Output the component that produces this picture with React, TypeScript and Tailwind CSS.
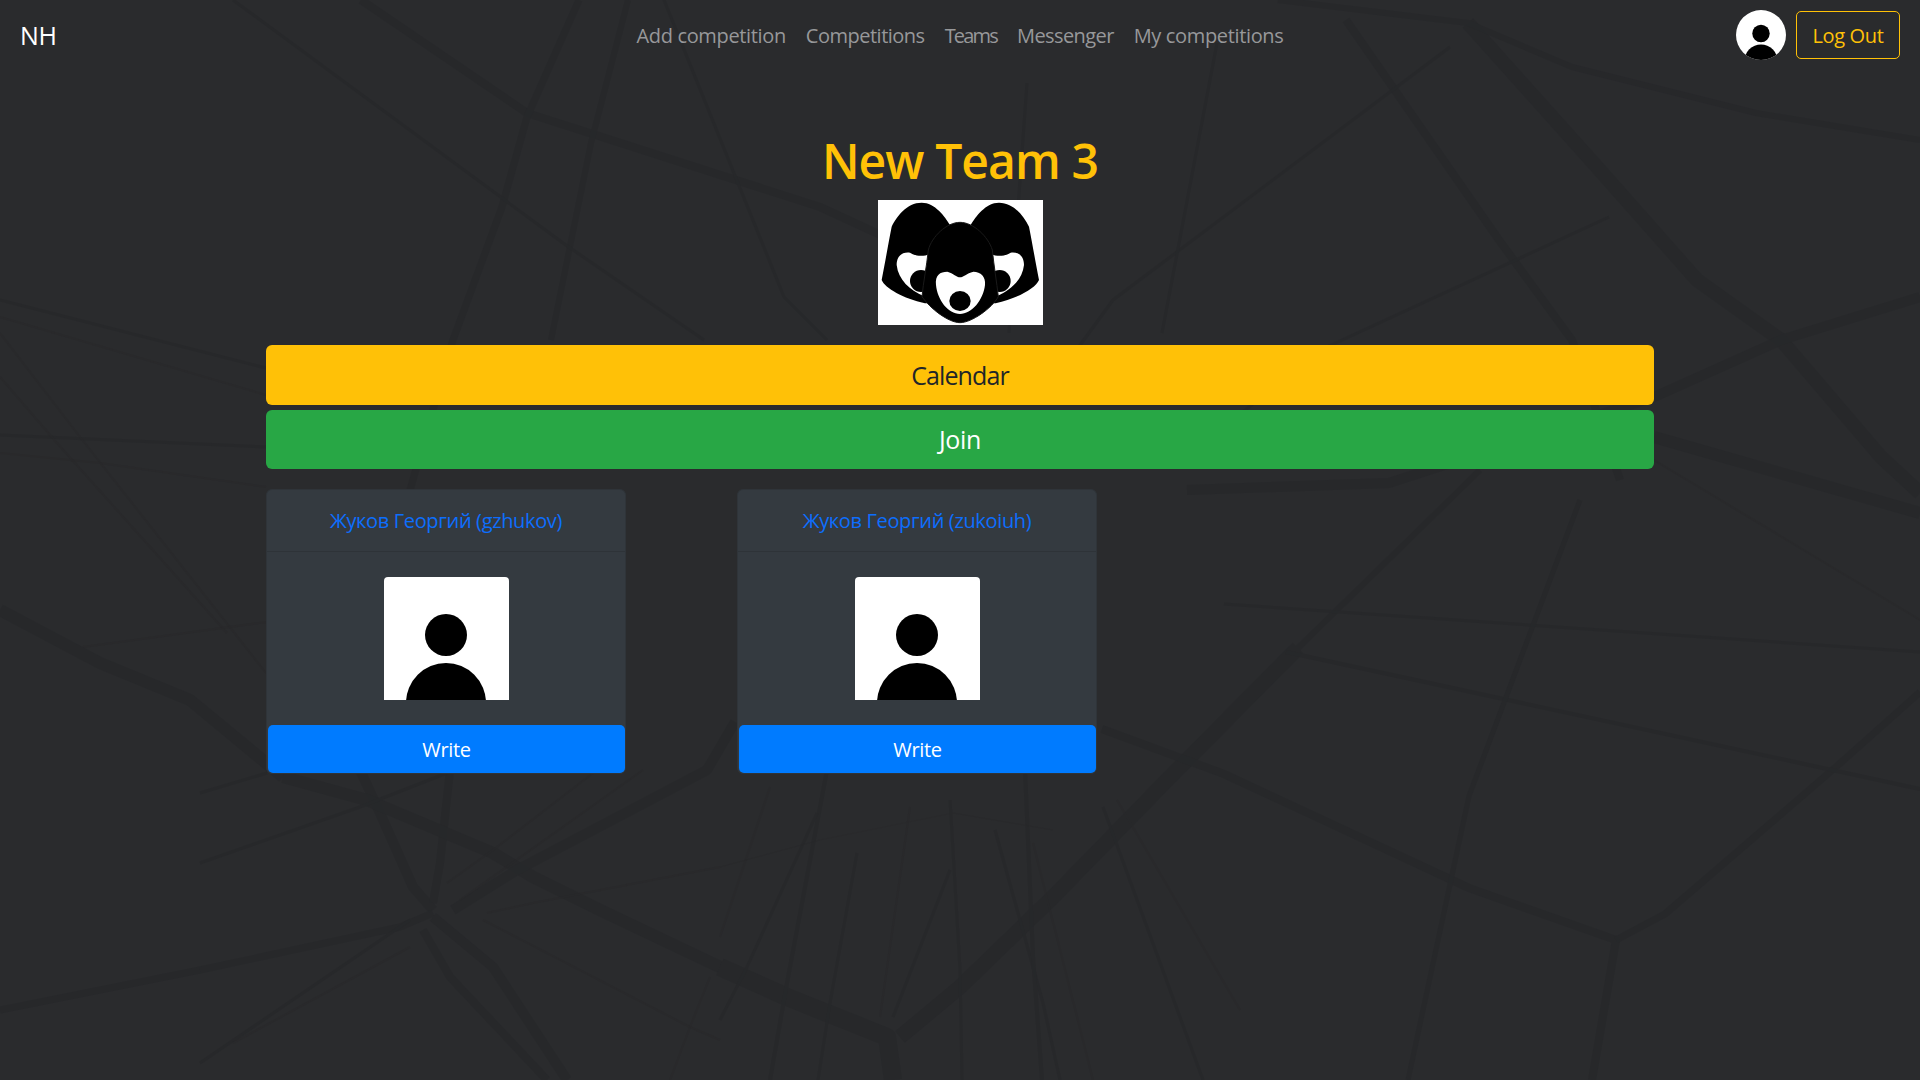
const bgLines: [string, number][] = [
  // top
  ['361,0 527,113 820,207 1000,290', 8],
  ['579,0 527,117 502,207 453,340 410,490', 7],
  ['628,0 591,143 551,340', 6],
  ['233,0 563,243 704,340', 3],
  ['664,0 784,297 827,340', 3],
  ['0,300 266,368', 3],
  ['1346,20 1499,240 1572,340 1620,480', 8],
  ['1468,23 1597,167 1697,280 1781,340 1881,457 1920,493', 14],
  ['1278,0 1468,23 1572,67 1756,113 1920,140', 6],
  ['1450,47 1113,300 1040,400', 3],
  ['1609,217 1327,347 1180,460', 3],
  ['1920,297 1781,340 1654,397 1389,483 1187,490', 10],
  ['1654,437 1920,513', 12],
  ['1654,460 1787,540 1920,620', 2],
  ['1217,43 1162,333', 3],
  ['1027,83 1009,333', 3],
  // left band
  ['0,317 266,395', 2],
  ['0,435 266,447', 3],
  ['0,333 80,437 266,673', 2],
  ['0,377 57,443 227,633', 2],
  ['0,453 100,463 266,487', 2],
  ['0,610 100,663 190,700 283,777', 12],
  ['83,647 266,622', 2],
  // lower left hub
  ['360,770 380,813 413,887 433,910', 10],
  ['450,770 440,863 433,903', 8],
  ['283,777 367,800 493,853 533,877 600,910 720,967', 12],
  ['735,722 707,770 517,870 453,910', 10],
  ['597,770 493,850 447,883', 2],
  ['643,770 460,900', 2],
  ['200,970 0,1010', 7],
  ['200,970 400,927 433,913', 7],
  ['200,863 360,807 447,773', 3],
  ['200,793 267,773', 3],
  ['433,917 493,967 567,1080', 10],
  ['423,930 450,977 547,1080', 8],
  ['483,920 690,1027 720,1040', 2],
  ['710,977 690,1027 670,1080', 2],
  ['410,920 200,1063', 3],
  ['410,947 233,1043', 2],
  ['487,913 533,903 720,867', 2],
  // lower centre
  ['720,967 787,997 887,1037 893,1080', 18],
  ['1298,648 1170,777 1053,897 960,987 900,1037', 15],
  ['1480,470 1298,648', 6],
  ['827,770 787,983 770,1080', 4],
  ['770,787 720,937', 2],
  ['817,813 747,967 720,1020', 3],
  ['857,853 830,1003 818,1080', 3],
  ['910,807 880,1017', 2],
  ['950,800 960,970 962,1080', 3],
  ['950,870 893,1017', 3],
  ['995,830 1043,1003 1060,1080', 3],
  ['1025,770 1033,957 1042,1080', 4],
  ['1033,843 1093,1080', 2],
  ['1103,807 1203,1080', 3],
  ['1117,800 1240,1010', 2],
  ['720,867 820,840 953,813 1053,830', 1],
  // lower right
  ['1102,729 1224,774 1469,888 1616,940 1592,1080', 8],
  ['1920,692 1837,766 1665,914 1616,940', 7],
  ['1224,604 1920,652', 3],
  ['1286,652 1920,789', 4],
  ['1580,500 1469,796 1408,1080', 5],
]

function Backdrop() {
  return (
    <svg className="absolute inset-0 h-full w-full" viewBox="0 0 1920 1080" preserveAspectRatio="none" aria-hidden="true">
      {bgLines.map(([points, width]) => (
        <polyline
          key={points}
          points={points}
          fill="none"
          stroke="#27282a"
          strokeOpacity={width < 3 ? 0.5 : 0.85}
          strokeWidth={width}
          strokeLinejoin="round"
        />
      ))}
    </svg>
  )
}

function TeamLogo() {
  const ear = 'M185,38 C225,38 255,80 270,105 L270,340 L195,340 C130,325 75,295 65,270 C75,220 85,160 95,110 C110,80 140,38 185,38 Z'
  const earWhite = 'M110,225 C110,195 130,185 150,188 C170,200 190,200 210,192 L190,318 C150,300 115,270 110,225 Z'
  return (
    <svg className="h-[125px] w-[165px] bg-white" viewBox="54 30 495 375" aria-label="Team logo">
      <path d={ear} fill="#000" />
      <path d={ear} fill="#000" transform="matrix(-1 0 0 1 602 0)" />
      <path d={earWhite} fill="#fff" />
      <path d={earWhite} fill="#fff" transform="matrix(-1 0 0 1 602 0)" />
      <circle cx="183" cy="273" r="33" fill="#000" />
      <circle cx="419" cy="273" r="33" fill="#000" />
      <path
        d="M300,97 C260,97 215,140 205,180 C200,230 190,275 186,320 C210,355 265,398 300,398 C335,398 395,355 415,320 C410,275 402,230 397,180 C385,140 340,97 300,97 Z"
        fill="#000"
        stroke="#1a1a1a"
        strokeWidth="3"
      />
      <path
        d="M228,285 C225,255 240,245 262,245 C280,250 290,262 300,262 C310,262 320,250 340,245 C362,245 378,260 375,285 C370,330 335,372 300,372 C265,372 232,330 228,285 Z"
        fill="#fff"
      />
      <ellipse cx="300" cy="333" rx="32" ry="30" fill="#000" />
    </svg>
  )
}

function MemberCard({ name }: { name: string }) {
  return (
    <div className="flex w-[360px] flex-col rounded-[6px] border border-[#2f3439] bg-[#343a40]">
      <a href="#" className="border-b border-[#2e3338] pb-[15px] pt-[16px] text-center leading-[30px] text-[#0d6efd]">
        {name}
      </a>
      <div className="flex justify-center p-[25px]">
        <svg className="h-[123px] w-[125px] rounded-t-[4px] bg-white" viewBox="0 0 125 123" aria-hidden="true">
          <circle cx="62" cy="58" r="21" fill="#000" />
          <circle cx="62" cy="126" r="40" fill="#000" />
        </svg>
      </div>
      <button type="button" className="ml-[1px] h-[48px] rounded-[5px] bg-[#007bff] pt-[1px] text-white">
        Write
      </button>
    </div>
  )
}

export default function App() {
  return (
    <div className="relative min-h-screen overflow-hidden bg-[#2a2b2d] font-['Open_Sans',sans-serif] text-[20px] tracking-[-0.35px]">
      <Backdrop />
      <div className="relative">
        <nav className="grid h-[71px] grid-cols-[1fr_auto_1fr] items-center px-[20px] pb-[1px]">
          <a href="#" className="pt-[1px] text-[25px] text-white">
            NH
          </a>
          <div className="flex pt-[1px] text-[#97989a]">
            <a href="#" className="px-[10px]">Add competition</a>
            <a href="#" className="px-[10px] tracking-[-0.5px]">Competitions</a>
            <a href="#" className="px-[10px] tracking-[-1.8px]">Teams</a>
            <a href="#" className="px-[10px] tracking-[-0.6px]">Messenger</a>
            <a href="#" className="px-[10px]">My competitions</a>
          </div>
          <div className="flex items-center justify-end gap-[10px]">
            <svg className="h-[50px] w-[50px] rounded-full bg-white" viewBox="0 0 50 50" aria-hidden="true">
              <circle cx="25" cy="23.5" r="8.7" fill="#000" />
              <circle cx="25" cy="51" r="16.5" fill="#000" />
            </svg>
            <button type="button" className="h-[48px] w-[104px] rounded-[5px] border border-[#ffc107] pt-[1px] text-[#ffc107]">
              Log Out
            </button>
          </div>
        </nav>
        <main className="mx-auto mt-[60px] flex w-[1388px] flex-col items-center">
          <h1 className="h-[69px] text-[48px] font-semibold leading-[60px] tracking-[-0.9px] text-[#ffc107]">New Team 3</h1>
          <TeamLogo />
          <button type="button" className="mt-[20px] h-[60px] w-full rounded-[6px] bg-[#ffc107] pt-[1px] text-[25px] tracking-[-0.9px] text-[#212529]">
            Calendar
          </button>
          <button type="button" className="mt-[5px] h-[59px] w-full rounded-[6px] bg-[#28a745] pt-[1px] text-[25px] text-white">
            Join
          </button>
          <div className="mt-[20px] flex w-full gap-[111px]">
            <MemberCard name="Жуков Георгий (gzhukov)" />
            <MemberCard name="Жуков Георгий (zukoiuh)" />
          </div>
        </main>
      </div>
    </div>
  )
}
